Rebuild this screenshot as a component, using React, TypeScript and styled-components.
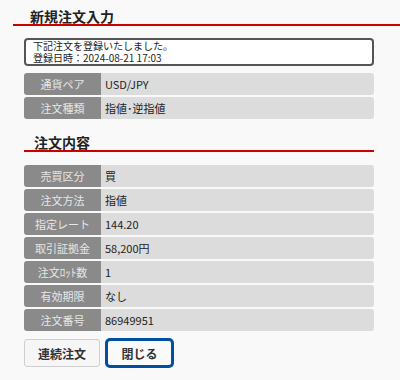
import React from "react";
import styled, { createGlobalStyle } from "styled-components";

const Global = createGlobalStyle`
  html, body { margin: 0; padding: 0; background: #f9f9f9; }
  body { font-family: "Noto Sans CJK JP", "Noto Sans", sans-serif; color: #222; }
`;

const Page = styled.div`
  width: 400px;
  height: 380px;
  overflow: hidden;
  background: #f9f9f9;
`;

const MainTitle = styled.h1`
  margin: 0 0 0 13px;
  padding: 9px 0 1px 17px;
  font-size: 14px;
  line-height: 14px;
  font-weight: bold;
  color: #222;
  border-bottom: 2px solid #cc0000;
`;

const Content = styled.div`
  padding: 0 26px 0 24px;
  display: flex;
  flex-direction: column;
`;

const Message = styled.div`
  margin-top: 12px;
  background: #fff;
  border: 2px solid #555;
  border-radius: 4px;
  padding: 0 7px;
  font-size: 10px;
  color: #222;
`;

const Line = styled.div`
  height: 12px;
  line-height: 12px;
  white-space: nowrap;
`;

const Table = styled.div<{ $top: number }>`
  margin-top: ${(p) => p.$top}px;
  display: flex;
  flex-direction: column;
  gap: 2px;
`;

const Row = styled.div`
  display: grid;
  grid-template-columns: 77px 1fr;
  height: 22px;
  border-radius: 3px;
  overflow: hidden;
`;

const Label = styled.div`
  background: #8a8a8a;
  color: #e6e6e6;
  font-size: 11px;
  display: flex;
  align-items: center;
  justify-content: center;
  white-space: nowrap;
`;

const Value = styled.div`
  background: #dcdcdc;
  color: #222;
  font-size: 11px;
  display: flex;
  align-items: center;
  padding-left: 4px;
`;

const SubTitle = styled.h2`
  margin: 16px 0 0;
  padding: 0 0 1px 10px;
  font-size: 14px;
  line-height: 14px;
  font-weight: bold;
  color: #222;
  border-bottom: 2px solid #cc0000;
`;

const Buttons = styled.div`
  margin-top: 7px;
  display: flex;
  align-items: center;
  gap: 5px;
`;

const Button = styled.button<{ $primary?: boolean }>`
  box-sizing: border-box;
  font-family: inherit;
  font-size: 12px;
  font-weight: bold;
  color: #333;
  cursor: pointer;
  padding: 0;
  width: ${(p) => (p.$primary ? 69 : 76)}px;
  height: ${(p) => (p.$primary ? 30 : 28)}px;
  background: ${(p) => (p.$primary ? "#fafafa" : "#f6f6f6")};
  border: ${(p) => (p.$primary ? "3px solid #00509f" : "1px solid #cfcfcf")};
  border-radius: ${(p) => (p.$primary ? 5 : 3)}px;
`;

const top = [
  ["通貨ペア", "USD/JPY"],
  ["注文種類", "指値･逆指値"],
];

const detail = [
  ["売買区分", "買"],
  ["注文方法", "指値"],
  ["指定レート", "144.20"],
  ["取引証拠金", "58,200円"],
  ["注文ﾛｯﾄ数", "1"],
  ["有効期限", "なし"],
  ["注文番号", "86949951"],
];

export default function App() {
  return (
    <Page>
      <Global />
      <MainTitle>新規注文入力</MainTitle>
      <Content>
        <Message>
          <Line>下記注文を登録いたしました。</Line>
          <Line>登録日時：2024-08-21 17:03</Line>
        </Message>
        <Table $top={7}>
          {top.map(([l, v]) => (
            <Row key={l}>
              <Label>{l}</Label>
              <Value>{v}</Value>
            </Row>
          ))}
        </Table>
        <SubTitle>注文内容</SubTitle>
        <Table $top={13}>
          {detail.map(([l, v]) => (
            <Row key={l}>
              <Label>{l}</Label>
              <Value>{v}</Value>
            </Row>
          ))}
        </Table>
        <Buttons>
          <Button>連続注文</Button>
          <Button $primary>閉じる</Button>
        </Buttons>
      </Content>
    </Page>
  );
}
